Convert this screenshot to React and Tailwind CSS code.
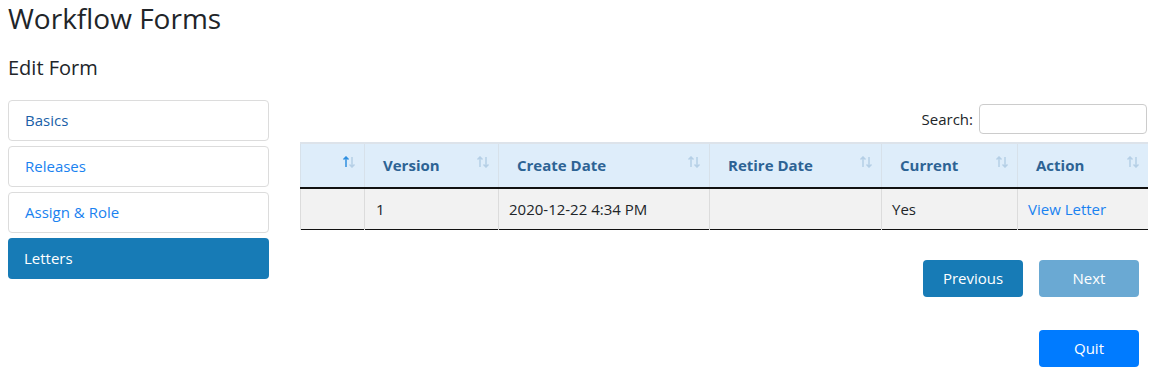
import { useState } from "react";

const columns = ["", "Version", "Create Date", "Retire Date", "Current", "Action"];
const widths = ["w-[64px]", "w-[134px]", "w-[211px]", "w-[172px]", "w-[136px]", "w-[130px]"];

function SortIcon({ active }) {
  return (
    <svg width="14" height="12" viewBox="0 0 14 12" className="absolute right-[8px] top-[12px]">
      <g strokeWidth="1.5" fill="none">
        <path d="M4 11V1M1.5 3.5L4 1l2.5 2.5" stroke={active ? "#2f8fe0" : "#b5cfe6"} />
        <path d="M10 1v10M7.5 8.5L10 11l2.5-2.5" stroke="#b5cfe6" />
      </g>
    </svg>
  );
}

function App() {
  const [tab, setTab] = useState("Letters");
  const tabs = ["Basics", "Releases", "Assign & Role", "Letters"];

  return (
    <div className="w-[1155px] h-[390px] bg-white text-[#212529] font-['Segoe_UI','Open_Sans',sans-serif]">
      <h1 className="pl-[8px] pt-[1px] text-[28px] leading-[34px] font-medium">Workflow Forms</h1>
      <h2 className="pl-[8px] mt-[21px] text-[20px] leading-[24px] font-medium">Edit Form</h2>

      <div className="flex mt-[20px]">
        <div className="ml-[8px] w-[261px] flex flex-col gap-[5px]">
          {tabs.map((t, i) => (
            <div
              key={t}
              onClick={() => setTab(t)}
              className={
                tab === t
                  ? "h-[41px] rounded-[4px] bg-[#177bb6] text-white text-[15px] flex items-center pl-[16px]"
                  : "h-[41px] rounded-[4px] border border-[#dcdcdc] text-[15px] flex items-center pl-[16px] " +
                    (i === 0 ? "text-[#1a5fa8]" : "text-[#1a82f0]")
              }
            >
              {t}
            </div>
          ))}
        </div>

        <div className="ml-[31px] w-[847px]">
          <div className="flex justify-end items-center gap-[6px] mt-[4px]">
            <span className="text-[15px]">Search:</span>
            <input className="w-[168px] h-[30px] border border-[#ccc] rounded-[4px]" />
          </div>

          <table className="mt-[8px] border-collapse text-[15px] table-fixed w-[847px]">
            <thead>
              <tr className="bg-[#deedfa] h-[45px] border-t-2 border-t-[#dde3ea]">
                {columns.map((c, i) => (
                  <th
                    key={i}
                    className={`${widths[i]} relative text-left font-bold text-[#2d6394] pl-[18px] border-l border-[#d7e1ea] border-b-2 border-b-[#111]`}
                  >
                    {c}
                    <SortIcon active={i === 0} />
                  </th>
                ))}
              </tr>
            </thead>
            <tbody>
              <tr className="bg-[#f2f2f2] h-[41px] border-b border-[#111]">
                <td className="border-l border-[#dcdcdc]"></td>
                <td className="pl-[11px] border-l border-[#dcdcdc]">1</td>
                <td className="pl-[10px] border-l border-[#dcdcdc]">2020-12-22 4:34 PM</td>
                <td className="border-l border-[#dcdcdc]"></td>
                <td className="pl-[10px] border-l border-[#dcdcdc]">Yes</td>
                <td className="pl-[10px] border-l border-[#dcdcdc] text-[#1a82f0]">View Letter</td>
              </tr>
            </tbody>
          </table>

          <div className="flex justify-end gap-[16px] mt-[30px] pr-[8px]">
            <button className="w-[100px] h-[37px] rounded-[4px] bg-[#177bb6] text-white text-[15px]">Previous</button>
            <button className="w-[100px] h-[37px] rounded-[4px] bg-[#6aa9d3] text-white text-[15px]">Next</button>
          </div>
          <div className="flex justify-end mt-[33px] pr-[8px]">
            <button className="w-[100px] h-[37px] rounded-[4px] bg-[#007bff] text-white text-[15px]">Quit</button>
          </div>
        </div>
      </div>
    </div>
  );
}

export default App;
